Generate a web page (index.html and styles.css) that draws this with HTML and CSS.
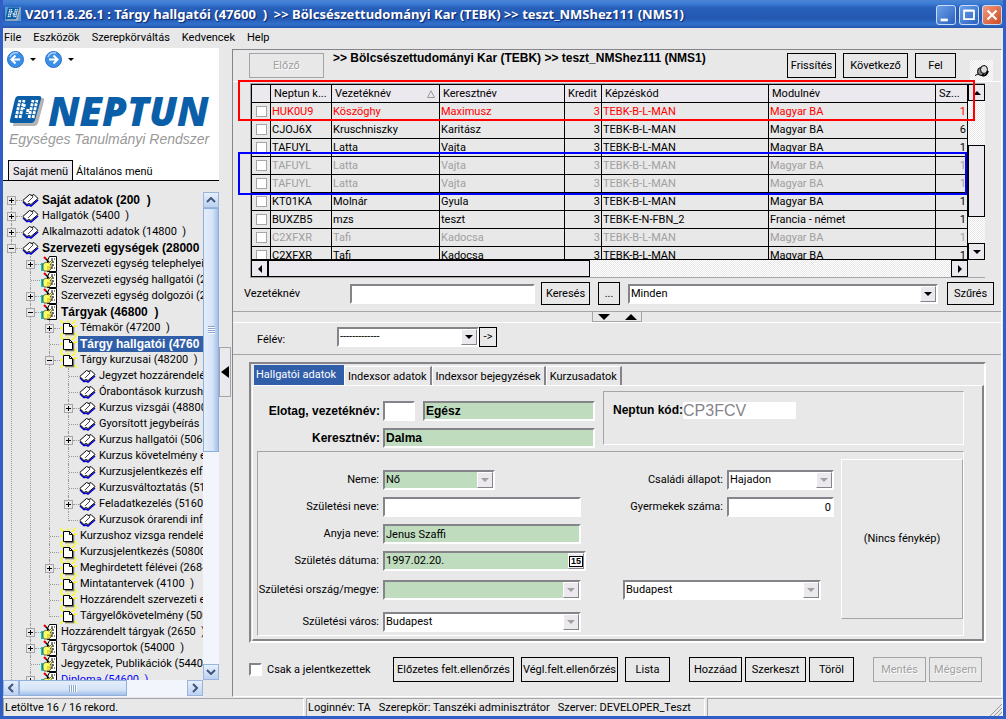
FILE: index.html
```html
<!DOCTYPE html>
<html lang="hu">
<head>
<meta charset="utf-8">
<title>Neptun - Tárgy hallgatói</title>
<link rel="stylesheet" href="styles.css">
</head>
<body>
<svg class="defs" width="0" height="0" aria-hidden="true">
  <symbol id="book" viewBox="0 0 17 16">
    <path d="M1 10 5 13.500 7 13 9 14 16 8" fill="none" stroke="#00d" stroke-width="1.600"/>
    <path d="M.8 8.500 7.500 2.500 10 3.500 12 2.500 16 6.500 9 12.500 7 11.500 5 12.500Z" fill="#fff" stroke="#000"/>
    <path d="M10 3.500 11 5 6 10" fill="none" stroke="#000" stroke-width=".7"/>
  </symbol>
  <symbol id="page" viewBox="0 0 17 16">
    <path d="M0 0l5 5M16 0l-4 4M0 8h4M0 16l5-5M17 6l-4 1M17 16l-4-4M8 0v3M8 16v-2" stroke="#ff0" stroke-width="1.300"/>
    <path d="M5 14.500h8.500V7" fill="none" stroke="#777" stroke-width="1.500"/>
    <path d="M3.500 3.500h6l3 3v7h-9Z" fill="#fff" stroke="#000"/>
    <path d="M9.500 3.500v3h3" fill="none" stroke="#000"/>
  </symbol>
  <symbol id="hand" viewBox="0 0 17 16">
    <path d="M8.500.5h7v15h-9v-11Z" fill="#fff" stroke="#000"/>
    <path d="M10 3h4M11 6h3M11 9h3M10 12h4" stroke="#000" stroke-dasharray="2 1"/>
    <path d="M0 7h2v8H0Z" fill="#0cc"/>
    <path d="M2 8 5 6 8 7 11 4 12 5 9 9 12 9 12 10 10 11 10 13 8 15 3 15 2 13Z" fill="#ff6" stroke="#000" stroke-width=".6"/>
    <path d="M6 11h4M6 13h3" stroke="#a80" stroke-width=".7"/>
    <path d="M4 2 8 6" stroke="#000" stroke-width="1.500"/><path d="M3 1 5 3" stroke="#e00" stroke-width="2"/>
  </symbol>
  <symbol id="tile" viewBox="0 0 36 32">
    <path d="M9 3h24q3 0 2 3l-6 22q-1 3-4 3H4Z" fill="#b5b5b5"/>
    <path d="M9 1h21q3 0 2 3l-6 21q-1 3-4 3H3q-3 0-2-3L6 4q1-3 3-3Z" fill="#0a5fa8"/>
    <path d="M7 23 11 5M11 23 15 5M15.500 9l-1 5M19 14l-1 5M20 23 24 5M24 23 28 5" stroke="#fff" stroke-width="2.800" stroke-dasharray="3 1" fill="none"/>
  </symbol>
  <symbol id="down" viewBox="0 0 8 4"><path d="M0 0h8L4 4Z" fill="currentColor"/></symbol>
  <symbol id="chev" viewBox="0 0 10 6"><path d="M1 1l4 4 4-4" fill="none" stroke="#44557c" stroke-width="2"/></symbol>
</svg>

<div class="window">
  <header class="titlebar">
    <svg class="app-icon" viewBox="0 0 36 32"><use href="#tile"/></svg>
    <h1>V2011.8.26.1 : Tárgy hallgatói (47600 &nbsp;) &nbsp;&gt;&gt; Bölcsészettudományi Kar (TEBK) &gt;&gt; teszt_NMShez111 (NMS1)</h1>
    <div class="win-buttons">
      <button aria-label="Kis méret"><svg viewBox="0 0 20 20"><path d="M4 14h8v3H4Z" fill="#fff"/></svg></button>
      <button aria-label="Teljes méret"><svg viewBox="0 0 20 20"><path d="M4.500 5.500h11v9h-11ZM4 5h12" fill="none" stroke="#fff" stroke-width="2"/></svg></button>
      <button class="close" aria-label="Bezárás"><svg viewBox="0 0 20 20"><path d="M5 5 15 15M15 5 5 15" stroke="#fff" stroke-width="2.400"/></svg></button>
    </div>
  </header>

  <nav class="menubar">
    <button>File</button><button>Eszközök</button><button>Szerepkörváltás</button><button>Kedvencek</button><button>Help</button>
  </nav>

  <main class="main">
    <aside class="sidebar">
      <div class="brand">
        <div class="history">
          <button aria-label="Vissza"><svg viewBox="0 0 17 17"><circle cx="8.500" cy="8.500" r="8" fill="#3c8fe8" stroke="#2a70c8"/><path d="M3 6q2-5 8-4" stroke="#a5d0ff" stroke-width="1.500" fill="none"/><path d="M13 8.500H5M8.500 4.500l-4 4 4 4" fill="none" stroke="#fff" stroke-width="2"/></svg></button>
          <svg class="tiny"><use href="#down"/></svg>
          <button aria-label="Előre"><svg viewBox="0 0 17 17"><circle cx="8.500" cy="8.500" r="8" fill="#3c8fe8" stroke="#2a70c8"/><path d="M3 6q2-5 8-4" stroke="#a5d0ff" stroke-width="1.500" fill="none"/><path d="M4 8.500h8M8.500 4.500l4 4-4 4" fill="none" stroke="#fff" stroke-width="2"/></svg></button>
          <svg class="tiny"><use href="#down"/></svg>
        </div>
        <div class="logo"><svg viewBox="0 0 36 32"><use href="#tile"/></svg><span>NEPTUN</span></div>
        <p class="tagline">Egységes Tanulmányi Rendszer</p>
        <div class="side-tabs"><button class="on">Saját menü</button><button>Általános menü</button></div>
      </div>
      <div class="tree-area">
        <div class="tree-view">
          <ul class="tree">
            <li><div class="row bold"><i class="box"></i><svg><use href="#book"/></svg><span>Saját adatok (200 &nbsp;)</span></div></li>
            <li><div class="row"><i class="box"></i><svg><use href="#book"/></svg><span>Hallgatók (5400 &nbsp;)</span></div></li>
            <li><div class="row"><i class="box"></i><svg><use href="#book"/></svg><span>Alkalmazotti adatok (14800 &nbsp;)</span></div></li>
            <li><div class="row bold"><i class="box open"></i><svg><use href="#book"/></svg><span>Szervezeti egységek (28000</span></div>
              <ul>
                <li><div class="row"><i class="box"></i><svg><use href="#hand"/></svg><span>Szervezeti egység telephelyei</span></div></li>
                <li><div class="row"><i></i><svg><use href="#hand"/></svg><span>Szervezeti egység hallgatói (2</span></div></li>
                <li><div class="row"><i class="box"></i><svg><use href="#hand"/></svg><span>Szervezeti egység dolgozói (2</span></div></li>
                <li><div class="row bold"><i class="box open"></i><svg><use href="#hand"/></svg><span>Tárgyak (46800 &nbsp;)</span></div>
                  <ul>
                    <li><div class="row"><i class="box"></i><svg><use href="#page"/></svg><span>Témakör (47200 &nbsp;)</span></div></li>
                    <li><div class="row bold selected"><i></i><svg><use href="#page"/></svg><span>Tárgy hallgatói (4760</span></div></li>
                    <li><div class="row"><i class="box open"></i><svg><use href="#page"/></svg><span>Tárgy kurzusai (48200 &nbsp;)</span></div>
                      <ul>
                        <li><div class="row"><i></i><svg><use href="#book"/></svg><span>Jegyzet hozzárendelé</span></div></li>
                        <li><div class="row"><i></i><svg><use href="#book"/></svg><span>Órabontások kurzush</span></div></li>
                        <li><div class="row"><i class="box"></i><svg><use href="#book"/></svg><span>Kurzus vizsgái (48800</span></div></li>
                        <li><div class="row"><i></i><svg><use href="#book"/></svg><span>Gyorsított jegybeírás</span></div></li>
                        <li><div class="row"><i class="box"></i><svg><use href="#book"/></svg><span>Kurzus hallgatói (5060</span></div></li>
                        <li><div class="row"><i></i><svg><use href="#book"/></svg><span>Kurzus követelmény e</span></div></li>
                        <li><div class="row"><i></i><svg><use href="#book"/></svg><span>Kurzusjelentkezés elfo</span></div></li>
                        <li><div class="row"><i></i><svg><use href="#book"/></svg><span>Kurzusváltoztatás (51</span></div></li>
                        <li><div class="row"><i class="box"></i><svg><use href="#book"/></svg><span>Feladatkezelés (5160</span></div></li>
                        <li class="end"><div class="row"><i></i><svg><use href="#book"/></svg><span>Kurzusok órarendi info</span></div></li>
                      </ul>
                    </li>
                    <li><div class="row"><i></i><svg><use href="#page"/></svg><span>Kurzushoz vizsga rendelé</span></div></li>
                    <li><div class="row"><i></i><svg><use href="#page"/></svg><span>Kurzusjelentkezés (50800</span></div></li>
                    <li><div class="row"><i class="box"></i><svg><use href="#page"/></svg><span>Meghirdetett félévei (2684</span></div></li>
                    <li><div class="row"><i></i><svg><use href="#page"/></svg><span>Mintatantervek (4100 &nbsp;)</span></div></li>
                    <li><div class="row"><i></i><svg><use href="#page"/></svg><span>Hozzárendelt szervezeti e</span></div></li>
                    <li class="end"><div class="row"><i></i><svg><use href="#page"/></svg><span>Tárgyelőkövetelmény (500</span></div></li>
                  </ul>
                </li>
                <li><div class="row"><i class="box"></i><svg><use href="#hand"/></svg><span>Hozzárendelt tárgyak (2650 &nbsp;)</span></div></li>
                <li><div class="row"><i class="box"></i><svg><use href="#hand"/></svg><span>Tárgycsoportok (54000 &nbsp;)</span></div></li>
                <li><div class="row"><i></i><svg><use href="#hand"/></svg><span>Jegyzetek, Publikációk (5440</span></div></li>
                <li><div class="row link"><i class="box"></i><svg><use href="#hand"/></svg><span>Diploma (54600 &nbsp;)</span></div></li>
              </ul>
            </li>
          </ul>
        </div>
        <div class="xp-v"><button class="up" aria-label="Fel görgetés"><svg><use href="#chev"/></svg></button><div class="thumb"></div><div class="gap"></div><button aria-label="Le görgetés"><svg><use href="#chev"/></svg></button></div>
        <div class="xp-h"><button class="left" aria-label="Balra"><svg><use href="#chev"/></svg></button><div class="thumb"></div><div class="gap"></div><button class="right" aria-label="Jobbra"><svg><use href="#chev"/></svg></button></div>
      </div>
    </aside>

    <div class="splitter"><button aria-label="Menü elrejtése"><svg viewBox="0 0 8 12"><path d="M8 0v12L0 6Z"/></svg></button></div>

    <section class="content">
      <div class="list-panel">
        <div class="toolbar">
          <button class="btn" disabled>Előző</button>
          <h2>&gt;&gt; Bölcsészettudományi Kar (TEBK) &gt;&gt; teszt_NMShez111 (NMS1)</h2>
          <button class="btn b-49">Frissítés</button><button class="btn b-65">Következő</button><button class="btn b-41">Fel</button>
          <button class="pin" aria-label="Rögzítés"><svg viewBox="0 0 14 12"><path d="M0 10.500 5 8" stroke="#000"/><ellipse cx="6" cy="6.500" rx="3.500" ry="4" fill="#888" stroke="#000"/><ellipse cx="9" cy="4.500" rx="3.500" ry="4" fill="#ddd" stroke="#000"/><path d="M7 10q4 2 6-4" stroke="#000" stroke-width="2" fill="none"/></svg></button>
        </div>
        <div class="grid">
          <div class="grid-clip">
            <table>
              <colgroup><col class="c-check"><col class="c-code"><col class="c-last"><col class="c-first"><col class="c-credit"><col class="c-train"><col><col class="c-sz"></colgroup>
              <thead><tr><th></th><th>Neptun k...</th><th><span class="sort">Vezetéknév<svg viewBox="0 0 9 8"><path d="M.5 7.500h7L4 .8Z" fill="none" stroke="#999"/></svg></span></th><th>Keresztnév</th><th>Kredit</th><th>Képzéskód</th><th>Modulnév</th><th>Sz...</th></tr></thead>
              <tbody>
                <tr class="red"><td><input type="checkbox" aria-label="HUK0U9"></td><td>HUK0U9</td><td>Köszöghy</td><td>Maximusz</td><td class="n">3</td><td>TEBK-B-L-MAN</td><td>Magyar BA</td><td class="n">1</td></tr>
                <tr><td><input type="checkbox" aria-label="CJOJ6X"></td><td>CJOJ6X</td><td>Kruschniszky</td><td>Karitász</td><td class="n">3</td><td>TEBK-B-L-MAN</td><td>Magyar BA</td><td class="n">6</td></tr>
                <tr><td><input type="checkbox" aria-label="TAFUYL"></td><td>TAFUYL</td><td>Latta</td><td>Vajta</td><td class="n">3</td><td>TEBK-B-L-MAN</td><td>Magyar BA</td><td class="n">1</td></tr>
                <tr class="dim"><td><input type="checkbox" aria-label="TAFUYL"></td><td>TAFUYL</td><td>Latta</td><td>Vajta</td><td class="n">3</td><td>TEBK-B-L-MAN</td><td>Magyar BA</td><td class="n">1</td></tr>
                <tr class="dim"><td><input type="checkbox" aria-label="TAFUYL"></td><td>TAFUYL</td><td>Latta</td><td>Vajta</td><td class="n">3</td><td>TEBK-B-L-MAN</td><td>Magyar BA</td><td class="n">1</td></tr>
                <tr><td><input type="checkbox" aria-label="KT01KA"></td><td>KT01KA</td><td>Molnár</td><td>Gyula</td><td class="n">3</td><td>TEBK-B-L-MAN</td><td>Magyar BA</td><td class="n">1</td></tr>
                <tr><td><input type="checkbox" aria-label="BUXZB5"></td><td>BUXZB5</td><td>mzs</td><td>teszt</td><td class="n">3</td><td>TEBK-E-N-FBN_2</td><td>Francia - német</td><td class="n">1</td></tr>
                <tr class="dim"><td><input type="checkbox" aria-label="C2XFXR"></td><td>C2XFXR</td><td>Tafi</td><td>Kadocsa</td><td class="n">3</td><td>TEBK-B-L-MAN</td><td>Magyar BA</td><td class="n">1</td></tr>
                <tr><td><input type="checkbox" aria-label="C2XFXR"></td><td>C2XFXR</td><td>Tafi</td><td>Kadocsa</td><td class="n">3</td><td>TEBK-B-L-MAN</td><td>Magyar BA</td><td class="n">1</td></tr>
              </tbody>
            </table>
          </div>
          <div class="sb-v"><button aria-label="Fel"><svg class="flip"><use href="#down"/></svg></button><div class="sp"></div><div class="thumb"></div><div class="sp2"></div><button aria-label="Le"><svg><use href="#down"/></svg></button></div>
          <div class="sb-h"><button aria-label="Balra"><svg class="rl"><use href="#down"/></svg></button><div class="thumb"></div><div class="sp"></div><button aria-label="Jobbra"><svg class="rr"><use href="#down"/></svg></button></div>
          <div class="mark mark-red"></div>
          <div class="mark mark-blue"></div>
        </div>
        <div class="search">
          <label for="q">Vezetéknév</label><input id="q" class="field" type="text">
          <button class="btn b-49">Keresés</button><button class="btn b-dots">...</button>
          <div class="combo grow"><select aria-label="Szűrő"><option>Minden</option></select><span class="arrow"><svg><use href="#down"/></svg></span></div>
          <button class="btn b-47">Szűrés</button>
        </div>
      </div>

      <div class="h-split"><div class="grip"><svg><use href="#down"/></svg><svg class="flip"><use href="#down"/></svg></div></div>

      <div class="term">
        <label for="term">Félév:</label>
        <div class="combo"><select id="term"><option>-------------</option></select><span class="arrow"><svg><use href="#down"/></svg></span></div>
        <button class="btn">-&gt;</button>
      </div>

      <div class="detail">
        <div class="tabbox">
          <div class="tabs"><button class="on">Hallgatói adatok</button><button>Indexsor adatok</button><button>Indexsor bejegyzések</button><button>Kurzusadatok</button></div>
          <div class="sheet">
            <div class="names">
              <div class="name-fields">
                <label for="last">Elotag, vezetéknév:</label><input class="field" type="text" aria-label="Előtag"><input id="last" class="field green last" type="text" value="Egész">
                <label for="first">Keresztnév:</label><input id="first" class="field green wide" type="text" value="Dalma">
              </div>
              <div class="group code"><label for="code">Neptun kód:</label><input id="code" type="text" value="CP3FCV"></div>
            </div>
            <div class="group person">
              <div class="col1">
                <label for="sex">Neme:</label><div class="combo off green short"><select id="sex"><option>Nő</option></select><span class="arrow"><svg><use href="#down"/></svg></span></div>
                <label for="bn">Születési neve:</label><input id="bn" class="field" type="text">
                <label for="mn">Anyja neve:</label><input id="mn" class="field green" type="text" value="Jenus Szaffi">
                <label for="bd">Születés dátuma:</label><div class="combo green date"><input id="bd" type="text" value="1997.02.20."><button class="arrow" aria-label="Naptár"><b>15</b></button></div>
                <label for="bc">Születési ország/megye:</label><div class="combo off green"><select id="bc"><option></option></select><span class="arrow"><svg><use href="#down"/></svg></span></div>
                <label for="bt">Születési város:</label><div class="combo off"><select id="bt"><option>Budapest</option></select><span class="arrow"><svg><use href="#down"/></svg></span></div>
              </div>
              <div class="col2">
                <div class="pairs">
                  <label for="ms">Családi állapot:</label><div class="combo off"><select id="ms"><option>Hajadon</option></select><span class="arrow"><svg><use href="#down"/></svg></span></div>
                  <label for="ch">Gyermekek száma:</label><input id="ch" class="field num" type="text" value="0">
                </div>
                <div class="combo off county"><select aria-label="Megye"><option>Budapest</option></select><span class="arrow"><svg><use href="#down"/></svg></span></div>
              </div>
              <div class="photo">(Nincs fénykép)</div>
            </div>
          </div>
        </div>
        <div class="actions">
          <input id="only" class="check" type="checkbox"><label for="only">Csak a jelentkezettek</label>
          <div class="set"><button class="btn b-121">Előzetes felt.ellenőrzés</button><button class="btn b-97">Végl.felt.ellenőrzés</button><button class="btn b-45">Lista</button></div>
          <div class="set tight"><button class="btn b-53">Hozzáad</button><button class="btn b-61">Szerkeszt</button><button class="btn b-45">Töröl</button></div>
          <div class="set tight"><button class="btn b-53" disabled>Mentés</button><button class="btn b-53" disabled>Mégsem</button></div>
        </div>
      </div>
    </section>
  </main>

  <footer class="status"><div class="s1">Letöltve 16 / 16 rekord.</div><div class="s2"><span>Loginnév: TA</span><span>Szerepkör: Tanszéki adminisztrátor</span><span>Szerver: DEVELOPER_Teszt</span></div><div class="s3"><svg viewBox="0 0 12 12"><path d="M0 12 12 0M4 12l8-8M8 12l4-4" stroke="#999"/></svg></div></footer>
</div>
</body>
</html>
```
FILE: styles.css
```css
:root {
  --face: #e8e8e8;
  --lilac: #ebe8ee;
  --dark: #85848a;
  --mid: #a5a4a8;
  --green: #bfdcbf;
  --select: #315ea8;
}
* { box-sizing: border-box; }
body { margin: 0; font: 11px/16px Roboto, "Liberation Sans", sans-serif; color: #000; }
button, input, select { font: inherit; color: inherit; margin: 0; }
button { padding: 0; border: 0; background: none; white-space: nowrap; }
h1, h2, p, ul { margin: 0; padding: 0; }
label { white-space: nowrap; }
svg { display: block; }
.defs { position: absolute; }

.window { display: flex; flex-direction: column; height: 100vh; min-width: 1000px; background: var(--face); border: 3px solid #2f5fc4; border-top: 0; overflow: hidden; }

.titlebar { flex: none; display: flex; align-items: center; height: 28px; margin: 0 -3px; padding: 0 4px 0 5px; background: linear-gradient(#4a83cf 0, #3f7fd8 3px, #2760bb 8px, #2358b0 18px, #3070cc 24px, #2555ad 100%); }
.app-icon { width: 16px; height: 14px; background: #5a9bd8; }
.titlebar h1 { flex: 1; margin-left: 4px; font: bold 13px/20px "Noto Sans", sans-serif; color: #fff; text-shadow: 1px 1px 1px #0a2470; white-space: nowrap; }
.win-buttons { display: flex; gap: 3px; padding-top: 1px; }
.win-buttons button { width: 20px; height: 20px; border: 1px solid #c8dcf8; border-radius: 3px; background: linear-gradient(135deg, #6ba0e8, #2a62c0); }
.win-buttons .close { background: linear-gradient(135deg, #f09a80, #d04a20); }
.win-buttons svg { width: 18px; height: 18px; }

.menubar { flex: none; display: flex; gap: 12px; height: 20px; padding: 0 0 1px 1px; }

.main { flex: 1; display: flex; min-height: 0; }

.sidebar { flex: 0 0 216px; display: flex; flex-direction: column; min-width: 0; min-height: 0; }
.brand { background: #fff; }
.history { display: flex; align-items: center; gap: 6px; padding: 3px 0 0 4px; }
.history button svg { width: 17px; height: 17px; }
.tiny { width: 6px; height: 3px; margin-right: 3px; }
.logo { display: flex; align-items: center; height: 34px; margin-top: 26px; padding-left: 6px; }
.logo svg { width: 36px; height: 32px; }
.logo span { margin-left: 3px; font: italic 800 40px/34px "Open Sans", sans-serif; color: #0a5fa8; }
.tagline { margin-top: 2px; padding-left: 6px; font: italic 14px/18px "Liberation Sans", Arial, sans-serif; color: #999; white-space: nowrap; }
.side-tabs { display: flex; margin-top: 12px; padding-left: 5px; border-bottom: 1px solid #000; }
.side-tabs button { height: 19px; margin-top: 1px; padding: 2px 3px 0; }
.side-tabs .on { height: 20px; margin: 0 0 -1px; padding: 2px 4px 0; border: 1px solid #000; border-bottom: 0; background: var(--lilac); }

.tree-area { flex: 1; display: grid; grid-template: minmax(0, 1fr) 17px / minmax(0, 1fr) 16px; min-height: 0; padding-top: 11px; }
.tree-view { overflow: hidden; }
.tree, .tree ul { list-style: none; }
.tree ul { padding-left: 19px; }
.tree li { position: relative; }
.tree li::before { content: ""; position: absolute; top: 0; bottom: 0; left: 8px; border-left: 1px dotted #999; }
.tree > li:first-child::before { top: 8px; }
.tree li.end::before { bottom: auto; height: 9px; }
.row { position: relative; display: flex; align-items: center; height: 16px; white-space: nowrap; }
.row i { flex: none; width: 9px; height: 9px; margin: 0 6px 0 4px; }
.row i::after { content: ""; position: absolute; left: 9px; top: 8px; width: 9px; border-top: 1px dotted #999; }
.row .box { position: relative; border: 1px solid var(--mid); background: linear-gradient(#000, #000) 50% 50% / 5px 1px no-repeat, linear-gradient(#000, #000) 50% 50% / 1px 5px no-repeat, var(--face); }
.row .box.open { background: linear-gradient(#000, #000) 50% 50% / 5px 1px no-repeat, var(--face); }
.row .box::after { left: 8px; top: 3px; width: 6px; }
.row svg { flex: none; width: 17px; height: 16px; }
.row span { margin-left: 1px; padding: 0 2px; }
.bold { font: bold 12px/16px "Liberation Sans", Arial, sans-serif; }
.selected span { flex: 1; background: var(--select); color: #fff; }
.link span { color: #00f; }

.xp-v, .xp-h { display: flex; background: #f2f5fc; }
.xp-v { flex-direction: column; }
.xp-h { grid-column: 1; }
.xp-v button, .xp-h button { flex: none; display: grid; place-items: center; width: 16px; height: 16px; border: 1px solid #9ab4dc; background: linear-gradient(#e6effc, #bcd2f2); }
.xp-v button svg, .xp-h button svg { width: 10px; height: 6px; }
.up svg { transform: rotate(180deg); }
.left svg { transform: rotate(90deg); }
.right svg { transform: rotate(-90deg); }
.xp-v .thumb { height: 244px; border: 1px solid #8fb0dc; background: repeating-linear-gradient(#8aa6d0 0 1px, #fff 1px 2px) 50% 50% / 7px 8px no-repeat, linear-gradient(90deg, #e4eefb, #d6e4f8 60%, #a4c0e8); }
.xp-h .thumb { width: 108px; height: 16px; border: 1px solid #8fb0dc; background: repeating-linear-gradient(90deg, #8aa6d0 0 1px, #fff 1px 2px) 50% 50% / 8px 7px no-repeat, linear-gradient(#e4eefb, #d6e4f8 60%, #a4c0e8); }
.gap { flex: 1; }

.splitter { flex: 0 0 13px; display: flex; flex-direction: column; padding-top: 299px; }
.splitter button { display: grid; place-items: center; width: 12px; height: 50px; border: 1px solid var(--mid); background: var(--lilac); }
.splitter svg { width: 8px; height: 12px; }

.content { flex: 1; display: flex; flex-direction: column; min-width: 0; margin: 1px 1px 0 0; border: 1px solid var(--dark); border-right-color: #fff; border-bottom-color: #fff; }

.btn { height: 24px; border: 1px solid #000; text-align: center; }
.btn:disabled { border-color: var(--mid); color: #a0a0a0; text-shadow: 1px 1px #fff; }
.b-41 { width: 41px; }
.b-45 { width: 45px; }
.b-47 { width: 47px; }
.b-49 { width: 49px; }
.b-53 { width: 53px; }
.b-61 { width: 61px; }
.b-65 { width: 65px; }
.b-97 { width: 97px; }
.b-121 { width: 121px; }

.list-panel { flex: none; border-bottom: 1px solid var(--mid); }
.toolbar { display: flex; gap: 7px; height: 32px; padding: 3px 8px 0 16px; border-bottom: 1px solid #fff; }
.toolbar .btn { height: 25px; }
.toolbar .btn:first-child { width: 75px; }
.toolbar h2 { flex: 1; margin-left: 2px; font: bold 12px/10px "Liberation Sans", Arial, sans-serif; white-space: nowrap; }
.pin { display: grid; place-items: center; width: 23px; height: 21px; margin: 7px 0 0 7px; background: repeating-conic-gradient(#fff 0 25%, var(--face) 0 50%) 0 0 / 2px 2px; }
.pin svg { width: 14px; height: 12px; }

.grid { position: relative; display: grid; grid-template: 176px 17px / minmax(0, 1fr) 17px; margin: 1px 16px 0 17px; border: 1px solid var(--mid); border-width: 1px 0 1px 1px; }
.grid-clip { overflow: hidden; border-bottom: 1px solid #000; }
.grid table { width: 100%; table-layout: fixed; border-collapse: collapse; }
.grid th, .grid td { height: 18px; padding: 0 1px; border: 1px solid #000; line-height: 15px; text-align: left; font-weight: normal; white-space: nowrap; overflow: hidden; }
.grid th { padding: 0 3px; background: var(--lilac); }
.grid .n { text-align: right; }
.c-check { width: 19px; }
.c-code { width: 61px; }
.c-last { width: 108px; }
.c-first { width: 125px; }
.c-credit { width: 37px; }
.c-train { width: 167px; }
.c-sz { width: 32px; }
.sort { display: flex; justify-content: space-between; align-items: center; }
.sort svg { width: 9px; height: 8px; }
.red { color: #f00; }
.dim { color: #a0a0a0; }
.grid input { display: block; appearance: none; width: 11px; height: 11px; margin-left: 3px; border: 1px solid var(--mid); background: #fff; }
.sb-v, .sb-h { display: flex; background: repeating-conic-gradient(#fff 0 25%, var(--face) 0 50%) 0 0 / 2px 2px; }
.sb-v { flex-direction: column; }
.sb-h { grid-column: 1; }
.sb-v button, .sb-h button { flex: none; display: grid; place-items: center; width: 17px; height: 17px; border: 1px solid #000; background: var(--lilac); }
.sb-v svg, .sb-h svg { width: 8px; height: 4px; }
.flip { transform: rotate(180deg); }
.rl { transform: rotate(90deg); }
.rr { transform: rotate(-90deg); }
.sb-v .thumb { height: 72px; border: 1px solid #000; background: var(--lilac); }
.sb-h .thumb { width: 322px; border: 1px solid #000; background: var(--lilac); }
.sb-v .sp { height: 44px; }
.sb-v .sp2, .sb-h .sp { flex: 1; }
.mark { position: absolute; left: -13px; border: 2px solid; pointer-events: none; }
.mark-red { top: -4px; right: 10px; height: 41px; border-color: #f00; }
.mark-blue { top: 68px; right: 18px; height: 43px; border-color: #00f; }

.field, .combo { height: 20px; border: 2px solid var(--dark); border-right-color: #fff; border-bottom-color: #fff; background: #fff; }
.field { padding: 0 1px; min-width: 0; }
.combo { position: relative; }
.combo select, .combo input { display: block; appearance: none; width: 100%; height: 16px; padding: 0 1px; border: 0; background: none; line-height: 16px; opacity: 1; }
.combo .arrow { position: absolute; top: 0; right: 0; bottom: 0; display: grid; place-items: center; width: 16px; border: 1px solid #fff; border-right-color: var(--dark); border-bottom-color: var(--dark); background: var(--lilac); pointer-events: none; }
.arrow svg { width: 8px; height: 4px; }
.off .arrow { color: #a0a0a0; }
.field.green, .combo.green { background: var(--green); }

.search { display: flex; align-items: center; height: 33px; padding: 0 7px 2px 11px; }
.search label { width: 106px; }
.search .field { width: 185px; margin-right: 6px; }
.search .btn { height: 23px; margin-right: 8px; }
.search .b-dots { width: 22px; }
.search .grow { flex: 1; margin-right: 9px; }
.search .btn:last-child { margin: 0; }

.h-split { flex: none; height: 11px; border-bottom: 1px solid #fff; display: flex; justify-content: center; }
.grip { display: flex; justify-content: center; align-items: center; gap: 15px; width: 50px; border: 1px solid var(--mid); border-top: 0; }
.grip svg { width: 12px; height: 6px; }

.term { flex: none; display: flex; align-items: center; height: 32px; padding: 0 0 4px 24px; border-bottom: 1px solid var(--mid); }
.term label { width: 80px; padding-top: 6px; }
.term .combo { width: 142px; }
.term .btn { width: 18px; height: 20px; }

.detail { flex: 1; display: flex; flex-direction: column; padding: 7px 15px 0 16px; min-height: 0; }
.tabbox { border: 2px solid var(--dark); border-right-color: #fff; border-bottom-color: #fff; padding: 1px 0 0 1px; }
.tabs { display: flex; align-items: flex-end; padding-left: 2px; }
.tabs button { height: 19px; padding: 2px 3px 0; border: 1px solid #fff; border-bottom: 0; border-right: 2px solid var(--dark); }
.tabs .on { height: 20px; padding: 0 6px 2px 1px; background: var(--select); color: #fff; border-color: var(--select); }
.sheet { padding: 5px 18px 3px 4px; border: 1px solid #fff; border-right: 2px solid var(--dark); border-bottom: 2px solid var(--dark); }
.names { display: flex; gap: 8px; }
.name-fields { flex: 0 0 338px; display: grid; grid-template-columns: 126px 32px 180px; row-gap: 7px; align-content: start; padding-top: 10px; font: bold 12px/16px "Liberation Sans", Arial, sans-serif; }
.name-fields label { padding-right: 3px; text-align: right; line-height: 20px; }
.name-fields .last { margin-left: 8px; }
.name-fields .wide { grid-column: 2 / 4; }
.group { border: 1px solid var(--mid); border-right-color: #fff; border-bottom-color: #fff; }
.code { flex: 1; display: flex; align-items: flex-start; height: 54px; padding: 10px 9px; font: bold 12px/16px "Liberation Sans", Arial, sans-serif; }
.code input { width: 113px; height: 17px; padding: 0; border: 0; background: #fff; color: #85848a; font: 16px/17px "Liberation Sans", Arial, sans-serif; }
.person { display: flex; margin-top: 3px; padding-bottom: 3px; }
.col1 { flex: 0 0 330px; display: grid; grid-template: 20px 20px 20px 20px 22px 25px / 121px 198px; align-items: end; gap: 7px 4px; padding-top: 18px; }
.col1 label { text-align: right; line-height: 20px; }
.col1 .short { width: 112px; }
.col1 .date { width: 203px; }
.date b { display: block; padding: 0 1px; border: 1px solid #000; background: #fff; font: bold 9px/9px "Liberation Sans", Arial, sans-serif; }
.col2 { flex: 1; padding: 18px 7px 0 35px; }
.pairs { display: grid; grid-template-columns: minmax(0, 1fr) 107px; grid-auto-rows: 20px; gap: 7px 4px; }
.pairs label { text-align: right; line-height: 20px; }
.num { text-align: right; }
.county { width: 198px; margin-top: 63px; }
.photo { flex: 0 0 122px; display: grid; place-items: center; height: 160px; margin-top: 7px; border: 1px solid #fff; border-right-color: var(--mid); border-bottom-color: var(--mid); }

.actions { display: flex; align-items: center; gap: 5px; padding: 14px 4px 0 0; }
.check { appearance: none; width: 13px; height: 13px; border: 2px solid var(--dark); border-right-color: #fff; border-bottom-color: #fff; background: #fff; }
.actions label { flex: 1; }
.set { display: flex; gap: 7px; margin-right: 14px; }
.tight { gap: 3px; }
.set:last-child { margin-right: 0; }
.actions .btn { height: 25px; }

.status { flex: none; display: flex; gap: 2px; height: 19px; padding-top: 1px; }
.status div { border: 1px solid var(--mid); border-right-color: #fff; border-bottom: 0; padding-left: 1px; line-height: 17px; white-space: nowrap; }
.status .s1 { flex: 0 0 301px; }
.status .s2 { flex: 0 0 399px; display: flex; gap: 8px; }
.status .s3 { flex: 1; display: flex; justify-content: flex-end; align-items: flex-end; }
.s3 svg { width: 12px; height: 12px; }
```
